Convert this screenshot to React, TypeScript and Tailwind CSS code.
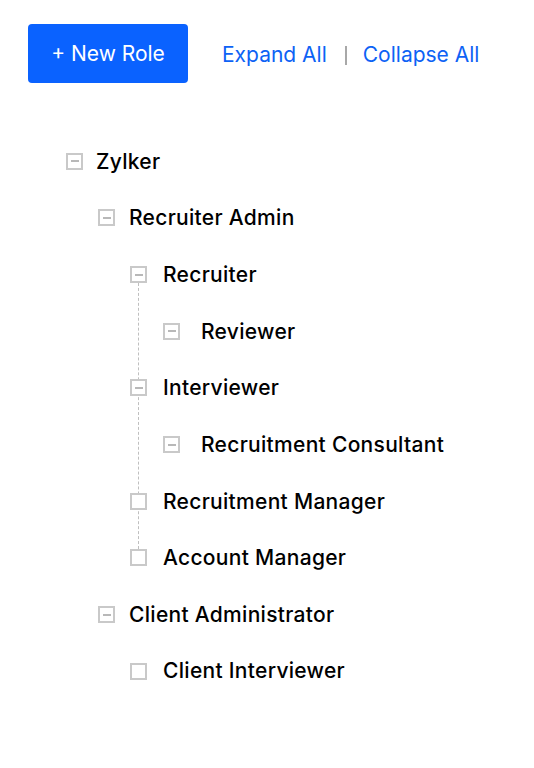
import React from 'react';

type Role = {
  name: string;
  open?: boolean;
  guide?: boolean;
  children?: Role[];
};

const tree: Role = {
  name: 'Zylker',
  open: true,
  children: [
    {
      name: 'Recruiter Admin',
      open: true,
      guide: true,
      children: [
        { name: 'Recruiter', open: true, children: [{ name: 'Reviewer', open: true }] },
        { name: 'Interviewer', open: true, children: [{ name: 'Recruitment Consultant', open: true }] },
        { name: 'Recruitment Manager' },
        { name: 'Account Manager' },
      ],
    },
    {
      name: 'Client Administrator',
      open: true,
      children: [{ name: 'Client Interviewer' }],
    },
  ],
};

// left offset of the box and gap to label, per depth
const boxPad = ['pl-[66px]', 'pl-[98px]', 'pl-[130px]', 'pl-[163px]'];
const labelGap = ['gap-[13px]', 'gap-[14px]', 'gap-[16px]', 'gap-[21px]'];

function ToggleBox({ open }: { open?: boolean }) {
  return (
    <span className="relative z-10 w-[17px] h-[17px] border-2 border-[#c9c9c9] flex items-center justify-center shrink-0 bg-white">
      {open && <span className="w-[8px] h-[2px] bg-[#b8b8b8]" />}
    </span>
  );
}

function Row({ role, depth }: { role: Role; depth: number }) {
  return (
    <div className={`flex items-center h-[56.67px] ${boxPad[depth]} ${labelGap[depth]}`}>
      <ToggleBox open={role.open} />
      <span className="text-[21px] font-medium text-black tracking-[0.3px]">{role.name}</span>
    </div>
  );
}

function Branch({ role, depth }: { role: Role; depth: number }) {
  const kids = role.children || [];
  return (
    <>
      <Row role={role} depth={depth} />
      {kids.length > 0 && (
        <div className="relative">
          {role.guide && (
            // dotted connector between the child boxes
            <span className="absolute left-[138px] top-[37px] bottom-[37px] border-l border-dashed border-[#bfbfbf]" />
          )}
          {kids.map((k) => (
            <Branch key={k.name} role={k} depth={depth + 1} />
          ))}
        </div>
      )}
    </>
  );
}

export default function App() {
  return (
    <div className="w-[534px] min-h-[768px] bg-white" style={{ fontFamily: 'Inter, "Noto Sans", sans-serif' }}>
      <div className="flex items-center pt-6 pl-7">
        <button className="w-[160px] h-[59px] rounded-[4px] bg-[#0a62ff] text-white text-[21px] flex items-center justify-center">
          + New Role
        </button>
        <div className="flex items-center ml-[34px] text-[21px] text-[#0d62f5] pt-[3px]">
          <span>Expand All</span>
          <span className="ml-[18px] mr-[16px] w-[2px] h-[19px] bg-[#a8a8a8]" />
          <span>Collapse All</span>
        </div>
      </div>
      <div className="mt-[50px]">
        <Branch role={tree} depth={0} />
      </div>
    </div>
  );
}
